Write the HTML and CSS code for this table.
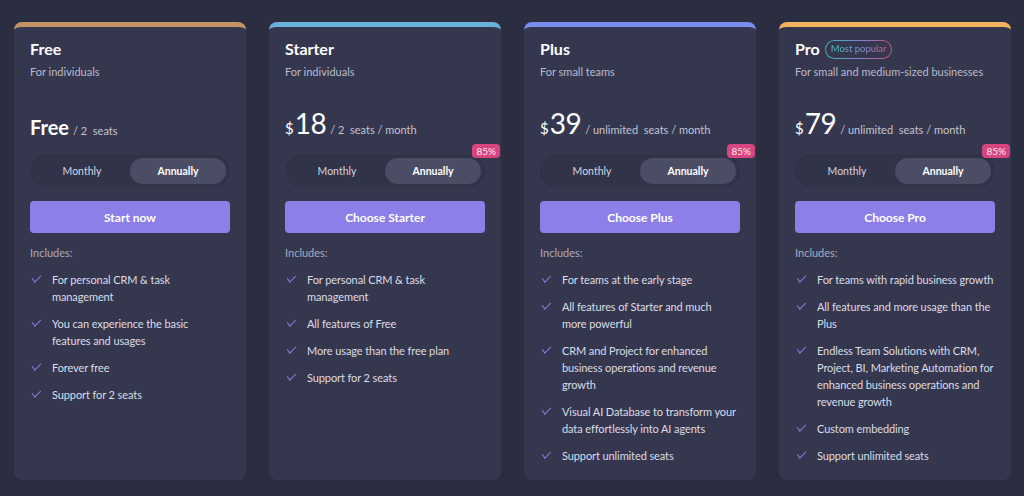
FILE: index.html
```html
<!DOCTYPE html>
<html lang="en">
<head>
<meta charset="utf-8">
<link rel="stylesheet" href="styles.css">
</head>
<body>
<div class="plans">
  <div class="card bar-free">
    <div class="title">Free</div>
    <div class="sub">For individuals</div>
    <div class="price"><div class="line"><span class="free">Free</span><span class="per">/ 2&nbsp; seats</span></div></div>
    <div class="toggle"><span class="opt">Monthly</span><span class="opt active">Annually</span></div>
    <button class="cta">Start now</button>
    <div class="inc">Includes:</div>
    <ul class="list">
      <li>For personal CRM &amp; task management</li>
      <li>You can experience the basic<br>features and usages</li>
      <li>Forever free</li>
      <li>Support for 2 seats</li>
    </ul>
  </div>
  <div class="card bar-starter">
    <div class="title">Starter</div>
    <div class="sub">For individuals</div>
    <div class="price"><div class="line"><span class="cur">$</span><span class="num">18</span><span class="per">/ 2&nbsp; seats / month</span></div></div>
    <div class="toggle"><span class="opt">Monthly</span><span class="opt active">Annually</span><span class="off">85%</span></div>
    <button class="cta">Choose Starter</button>
    <div class="inc">Includes:</div>
    <ul class="list">
      <li>For personal CRM &amp; task management</li>
      <li>All features of Free</li>
      <li>More usage than the free plan</li>
      <li>Support for 2 seats</li>
    </ul>
  </div>
  <div class="card bar-plus">
    <div class="title">Plus</div>
    <div class="sub">For small teams</div>
    <div class="price"><div class="line"><span class="cur">$</span><span class="num">39</span><span class="per">/ unlimited&nbsp; seats / month</span></div></div>
    <div class="toggle"><span class="opt">Monthly</span><span class="opt active">Annually</span><span class="off">85%</span></div>
    <button class="cta">Choose Plus</button>
    <div class="inc">Includes:</div>
    <ul class="list">
      <li>For teams at the early stage</li>
      <li>All features of Starter and much<br>more powerful</li>
      <li>CRM and Project for enhanced business operations and revenue growth</li>
      <li>Visual AI Database to transform your data effortlessly into AI agents</li>
      <li>Support unlimited seats</li>
    </ul>
  </div>
  <div class="card bar-pro">
    <div class="title">Pro <span class="pop"><span class="pop-text">Most popular</span></span></div>
    <div class="sub">For small and medium-sized businesses</div>
    <div class="price"><div class="line"><span class="cur">$</span><span class="num">79</span><span class="per">/ unlimited&nbsp; seats / month</span></div></div>
    <div class="toggle"><span class="opt">Monthly</span><span class="opt active">Annually</span><span class="off">85%</span></div>
    <button class="cta">Choose Pro</button>
    <div class="inc">Includes:</div>
    <ul class="list">
      <li>For teams with rapid business growth</li>
      <li>All features and more usage than the Plus</li>
      <li>Endless Team Solutions with CRM, Project, BI, Marketing Automation for enhanced business operations and revenue growth</li>
      <li>Custom embedding</li>
      <li>Support unlimited seats</li>
    </ul>
  </div>
</div>
</body>
</html>
```
FILE: styles.css
```css
* { box-sizing: border-box; }
html, body { margin: 0; height: 100%; }
body {
  background: #2b2d41;
  font-family: "Lato", "Liberation Sans", sans-serif;
  color: #fff;
}
.plans {
  display: flex;
  gap: 23px;
  padding: 22px 0 0 14px;
  align-items: stretch;
}
.card {
  width: 232px;
  background: #35374f;
  border-radius: 8px;
  border-top: 5px solid #c3946a;
  padding: 12px 16px 16px;
  display: flex;
  flex-direction: column;
}
.bar-free { border-top-color: #c3946a; }
.bar-starter { border-top-color: #6ab0da; }
.bar-plus { border-top-color: #7a8ded; }
.bar-pro { border-top-color: #f1b35d; }
.title {
  font-size: 16px;
  font-weight: 700;
  line-height: 20px;
  display: flex;
  align-items: center;
  gap: 5px;
}
.sub {
  margin-top: 4px;
  font-size: 11px;
  line-height: 18px;
  color: #b9bbcc;
  white-space: nowrap;
}
.pop {
  display: inline-flex;
  align-items: center;
  height: 19px;
  padding: 0 5px;
  border-radius: 10px;
  border: 1px solid transparent;
  background: linear-gradient(#35374f, #35374f) padding-box,
              linear-gradient(90deg, #3fb8a4, #7d84d6, #c9506e) border-box;
}
.pop-text {
  font-size: 9.5px;
  font-weight: 400;
  line-height: 12px;
  background: linear-gradient(90deg, #4cc6b0, #7f93e0 55%, #d06682);
  -webkit-background-clip: text;
  background-clip: text;
  color: transparent;
}
.price {
  margin-top: 28px;
  height: 36px;
  padding-bottom: 8px;
  display: flex;
  align-items: flex-end;
}
.line {
  display: flex;
  align-items: baseline;
  line-height: 1;
}
.free { font-size: 20px; font-weight: 700; }
.cur { font-size: 15px; margin-right: 1px; }
.num { font-size: 28px; font-weight: 400; letter-spacing: -0.5px; }
.per { font-size: 11px; color: #c2c4d2; margin-left: 4px; }
.toggle {
  position: relative;
  margin-top: 10px;
  height: 32px;
  border: 1px solid #2e3045;
  background: #313349;
  border-radius: 16px;
  display: flex;
  padding: 2px 3px;
}
.opt {
  flex: 1;
  display: flex;
  align-items: center;
  justify-content: center;
  font-size: 10.5px;
  color: #d5d6e0;
  border-radius: 13px;
}
.opt.active {
  background: #4b4d65;
  color: #fff;
  font-weight: 700;
}
.off {
  position: absolute;
  right: -16px;
  top: -12px;
  height: 14px;
  padding: 0 4px;
  border-radius: 4px;
  background: #d8457e;
  color: #fde6ef;
  font-size: 10px;
  line-height: 14px;
}
.cta {
  margin-top: 14px;
  height: 32px;
  border: 0;
  border-radius: 4px;
  background: #8c7fe7;
  color: #fff;
  font-family: inherit;
  font-size: 12px;
  font-weight: 700;
}
.inc {
  margin-top: 11px;
  font-size: 11px;
  line-height: 18px;
  color: #a9abbe;
}
.list {
  list-style: none;
  margin: 9px 0 0;
  padding: 0;
  display: flex;
  flex-direction: column;
  gap: 10px;
}
.list li {
  position: relative;
  padding-left: 22px;
  margin-right: -4px;
  font-size: 11px;
  line-height: 17px;
  letter-spacing: -0.1px;
  color: #dcdde6;
}
.list li::before {
  content: "";
  position: absolute;
  left: 2px;
  top: 4px;
  width: 8px;
  height: 4px;
  border-left: 1.3px solid #8c7fe7;
  border-bottom: 1.3px solid #8c7fe7;
  transform: rotate(-45deg) skewX(-8deg);
  transform-origin: center;
}
```
